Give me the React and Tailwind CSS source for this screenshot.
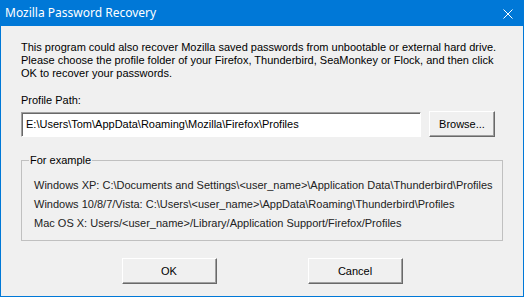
export default function App() {
  const body = { fontFamily: '"Liberation Sans", Arial, sans-serif' };
  return (
    <div className="w-[524px] h-[297px] bg-[#0078d7] px-[1px] pb-[1px] flex flex-col" style={body}>
      <div className="h-[26px] flex items-center justify-between pl-[4px] pr-[10px] text-white">
        <span className="text-[12px]" style={{ fontFamily: '"Noto Sans", "Open Sans", sans-serif' }}>Mozilla Password Recovery</span>
        <svg width="10" height="10" viewBox="0 0 10 10" className="mt-[1px]">
          <path d="M0.5 0.5 L9.5 9.5 M9.5 0.5 L0.5 9.5" stroke="white" strokeWidth="1" />
        </svg>
      </div>
      <div className="flex-1 bg-[#f0f0f0] px-[20px] pt-[15px] text-[11px] leading-[13px] text-black flex flex-col">
        <p>
          This program could also recover Mozilla saved passwords from unbootable or external hard drive.<br />
          Please choose the profile folder of your Firefox, Thunderbird, SeaMonkey or Flock, and then click<br />
          OK to recover your passwords.
        </p>
        <div className="mt-[14px]">Profile Path:</div>
        <div className="mt-[4px] flex items-start">
          <div className="mt-[1px] w-[400px] h-[25px] bg-white border-t border-l border-[#a0a0a0] border-r border-b border-r-white border-b-white shadow-[inset_1px_1px_0_#696969] flex items-center pl-[4px]">
            E:\Users\Tom\AppData\Roaming\Mozilla\Firefox\Profiles
          </div>
          <button className="ml-[8px] w-[66px] h-[26px] bg-[#f0f0f0] border border-t-white border-l-white border-r-[#696969] border-b-[#696969] shadow-[inset_-1px_-1px_0_#a0a0a0] flex items-center justify-center">
            Browse...
          </button>
        </div>
        <div className="mt-[23px] relative h-[81px] border border-[#c0c0c0] pl-[12px] pt-[15px] text-[#222]">
          <span className="absolute left-[7px] top-[-7px] bg-[#f0f0f0] px-[1px] text-black">For example</span>
          <div className="leading-[19px]">
            <div>Windows XP: C:\Documents and Settings\&lt;user_name&gt;\Application Data\Thunderbird\Profiles</div>
            <div>Windows 10/8/7/Vista: C:\Users\&lt;user_name&gt;\AppData\Roaming\Thunderbird\Profiles</div>
            <div>Mac OS X: Users/&lt;user_name&gt;/Library/Application Support/Firefox/Profiles</div>
          </div>
        </div>
        <div className="mt-[17px] flex justify-center gap-[91px]">
          <button className="w-[95px] h-[26px] bg-[#f0f0f0] border border-t-white border-l-white border-r-[#696969] border-b-[#696969] shadow-[inset_-1px_-1px_0_#a0a0a0] flex items-center justify-center">
            OK
          </button>
          <button className="w-[95px] h-[26px] bg-[#f0f0f0] border border-t-white border-l-white border-r-[#696969] border-b-[#696969] shadow-[inset_-1px_-1px_0_#a0a0a0] flex items-center justify-center">
            Cancel
          </button>
        </div>
      </div>
    </div>
  );
}
